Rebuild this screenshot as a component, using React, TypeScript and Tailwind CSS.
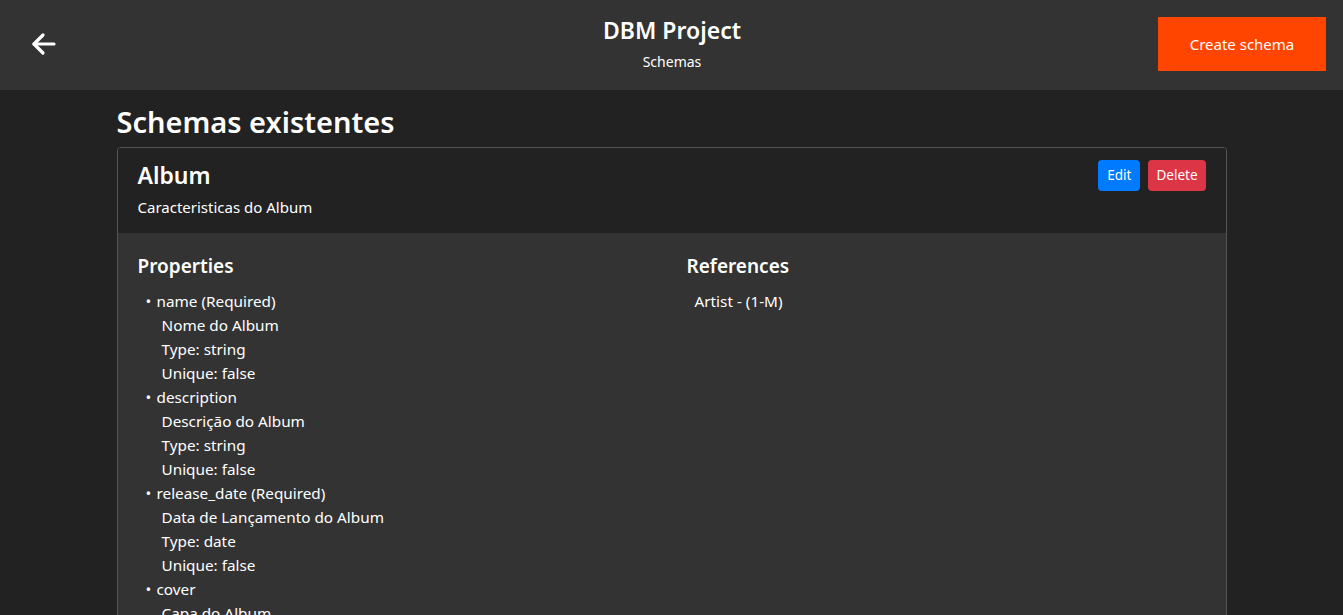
import React from "react";

interface Property {
  name: string;
  required?: boolean;
  description: string;
  type: string;
  unique: boolean;
}

const properties: Property[] = [
  { name: "name", required: true, description: "Nome do Album", type: "string", unique: false },
  { name: "description", description: "Descrição do Album", type: "string", unique: false },
  { name: "release_date", required: true, description: "Data de Lançamento do Album", type: "date", unique: false },
  { name: "cover", description: "Capa do Album", type: "string", unique: false },
];

function BackArrow() {
  return (
    <svg width="26" height="24" viewBox="0 0 26 24" fill="none" stroke="white" strokeWidth="3.2" strokeLinecap="round" strokeLinejoin="round">
      <path d="M23 12H3" />
      <path d="M12 3L3 12l9 9" />
    </svg>
  );
}

export default function App() {
  return (
    <div className="min-h-screen bg-[#222222] text-white font-['Noto_Sans',sans-serif]">
      <header className="h-[90px] bg-[#333333] flex items-center justify-between px-[30px]">
        <button className="w-[28px] h-[28px] flex items-center justify-center -mt-[2px]">
          <BackArrow />
        </button>
        <div className="self-start flex flex-col items-center pl-[128px] pt-[15px]">
          <h1 className="text-[23px] font-semibold leading-[30px]">DBM Project</h1>
          <span className="text-[14px] leading-[20px] mt-[7px]">Schemas</span>
        </div>
        <button className="bg-[#ff4500] text-[15px] w-[168px] h-[54px] -mr-[13px] -mt-[2px]">Create schema</button>
      </header>

      <main className="max-w-[1140px] mx-auto px-[15px]">
        <h2 className="text-[29px] font-semibold leading-[38px] mt-[13px] mb-[6px]">Schemas existentes</h2>
        <div className="border border-[#555555] rounded-[4px] overflow-hidden">
          <div className="bg-[#222222] px-[20px] pt-[12px] pb-[15px] flex justify-between">
            <div>
              <h3 className="text-[23px] font-semibold leading-[30px]">Album</h3>
              <p className="text-[15px] leading-[22px] mt-[6px]">Caracteristicas do Album</p>
            </div>
            <div className="flex gap-[8px] items-start">
              <button className="bg-[#007bff] rounded-[4px] px-[9px] h-[31px] text-[13.5px]">Edit</button>
              <button className="bg-[#dc3545] rounded-[4px] px-[8px] h-[31px] text-[13.5px]">Delete</button>
            </div>
          </div>
          <div className="bg-[#333333] px-[20px] pt-[20px] pb-[20px] grid grid-cols-2 gap-x-[30px]">
            <div>
              <h4 className="text-[19px] font-semibold leading-[26px] mb-[10px]">Properties</h4>
              <ul className="text-[15.3px] leading-[24px] pl-[8px]">
                {properties.map((p) => (
                  <li key={p.name}>
                    <div className="flex">
                      <span className="w-[11px]">•</span>
                      <span>
                        {p.name}
                        {p.required ? " (Required)" : ""}
                      </span>
                    </div>
                    <div className="pl-[16px]">
                      <div>{p.description}</div>
                      <div>Type: {p.type}</div>
                      <div>Unique: {p.unique ? "true" : "false"}</div>
                    </div>
                  </li>
                ))}
              </ul>
            </div>
            <div>
              <h4 className="text-[19px] font-semibold leading-[26px] mb-[10px]">References</h4>
              <ul className="text-[15.3px] leading-[24px] pl-[8px]">
                <li>Artist - (1-M)</li>
              </ul>
            </div>
          </div>
        </div>
      </main>
    </div>
  );
}
